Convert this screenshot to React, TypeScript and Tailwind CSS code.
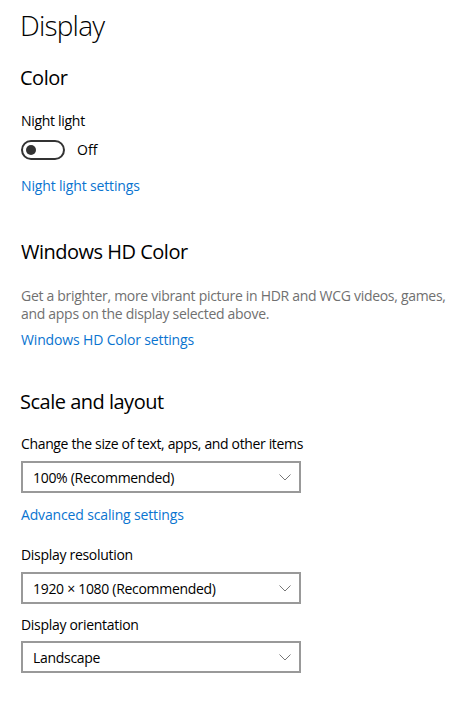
import React from "react";

const font = { fontFamily: '"Open Sans", "Noto Sans", sans-serif' };

function Chevron() {
  return (
    <svg width="12" height="7" viewBox="0 0 12 7" fill="none">
      <polyline points="0.5,0.5 6,6 11.5,0.5" stroke="#777" strokeWidth="1" />
    </svg>
  );
}

function Dropdown({ value, className = "" }: { value: string; className?: string }) {
  return (
    <div
      className={`flex items-center justify-between w-[280px] h-[32px] border-2 border-[#999] bg-white pl-[10px] pr-[8px] text-[14px] tracking-[-0.3px] text-black ${className}`}
    >
      <span>{value}</span>
      <Chevron />
    </div>
  );
}

function Link({ children, className = "" }: { children: React.ReactNode; className?: string }) {
  return (
    <div className={`text-[14px] leading-[20px] tracking-[-0.15px] text-[#0a74d0] ${className}`}>{children}</div>
  );
}

export default function App() {
  return (
    <div className="w-[465px] h-[703px] bg-white pl-[20px] pt-[7px] text-black" style={font}>
      <h1 className="text-[28px] leading-[36px] font-light tracking-[-0.8px]">Display</h1>

      <h2 className="mt-[21px] text-[20px] leading-[28px] tracking-[-0.5px]">Color</h2>
      <div className="mt-[19px] pl-px text-[14px] leading-[20px] tracking-[-0.3px]">Night light</div>
      <div className="mt-[9px] pl-px flex items-center gap-[12px]">
        <div className="w-[44px] h-[20px] rounded-full border-2 border-[#333] flex items-center pl-[3px]">
          <div className="w-[10px] h-[10px] rounded-full bg-[#333]" />
        </div>
        <span className="text-[14px] leading-[20px]">Off</span>
      </div>
      <Link className="mt-[16px] pl-px">Night light settings</Link>

      <h2 className="mt-[42px] pl-px text-[20px] leading-[28px] tracking-[-0.5px]">Windows HD Color</h2>
      <p className="mt-[21px] pl-px w-[440px] text-[14px] leading-[18px] tracking-[-0.3px] text-[#707070]">
        Get a brighter, more vibrant picture in HDR and WCG videos, games, and apps on the display selected above.
      </p>
      <Link className="mt-[7px] pl-px">Windows HD Color settings</Link>

      <h2 className="mt-[38px] text-[20px] leading-[28px] tracking-[-0.5px]">Scale and layout</h2>
      <div className="mt-[18px] pl-px text-[14px] leading-[20px] tracking-[-0.35px]">
        Change the size of text, apps, and other items
      </div>
      <Dropdown className="mt-[7px] ml-px" value="100% (Recommended)" />
      <Link className="mt-[12px] pl-px">Advanced scaling settings</Link>

      <div className="mt-[20px] pl-px text-[14px] leading-[20px] tracking-[-0.3px]">Display resolution</div>
      <Dropdown className="mt-[7px] ml-px" value="1920 × 1080 (Recommended)" />
      <div className="mt-[11px] pl-px text-[14px] leading-[20px] tracking-[-0.3px]">Display orientation</div>
      <Dropdown className="mt-[6px] ml-px" value="Landscape" />
    </div>
  );
}
